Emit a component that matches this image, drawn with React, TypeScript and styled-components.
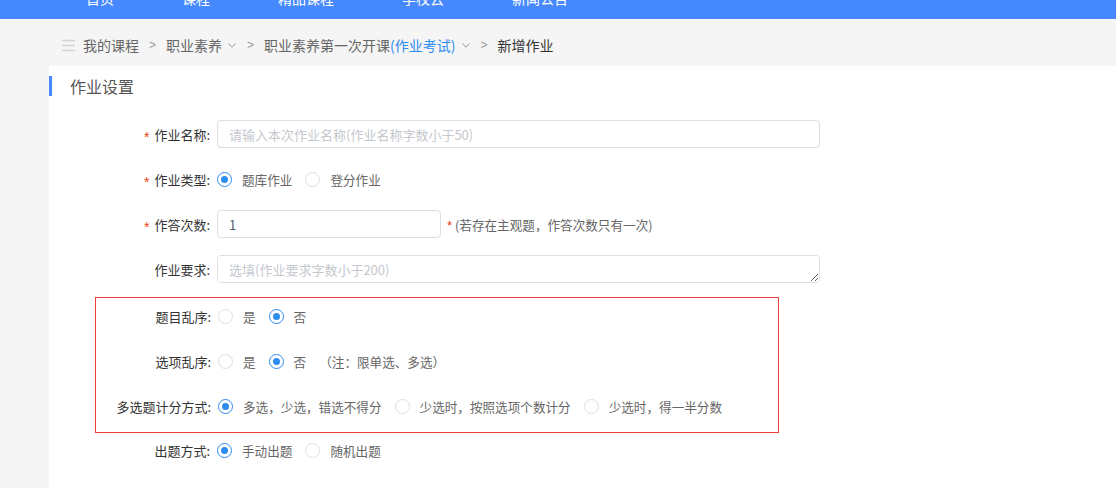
import { useState } from "react";
import styled, { createGlobalStyle } from "styled-components";

const GlobalStyle = createGlobalStyle`
  html, body {
    margin: 0;
    padding: 0;
  }
  body {
    background: #f5f5f5;
    font-family: "Noto Sans CJK SC", "Noto Sans", sans-serif;
    font-size: 13px;
    color: #333;
  }
  * {
    box-sizing: border-box;
  }
`;

const navItems = ["首页", "课程", "精品课程", "学校云", "新闻公告"];

// 顶部导航
const Nav = styled.nav`
  height: 19px;
  background: #4689ff;
  overflow: hidden;
  display: flex;
  gap: 68px;
  padding-left: 86px;
`;

const NavItem = styled.a`
  color: #fff;
  font-size: 14px;
  line-height: 14px;
  margin-top: -9px;
  white-space: nowrap;
  cursor: pointer;
`;

// 面包屑
const Breadcrumb = styled.div`
  height: 47px;
  display: flex;
  align-items: center;
  padding: 5px 0 0 62px;
  font-size: 14px;
  color: #666;
`;

const MenuIcon = styled.svg`
  margin-right: 8px;
`;

const Crumb = styled.span<{ $current?: boolean }>`
  color: ${(p) => (p.$current ? "#333" : "#666")};
  white-space: nowrap;
`;

const CrumbLink = styled.span`
  color: #2d8cf0;
`;

const Sep = styled.span`
  margin: 0 10px;
  color: #999;
  font-family: "Liberation Sans", sans-serif;
  font-size: 12px;
`;

const Caret = styled.svg`
  margin: 0 1px 0 6px;
`;

// 主体
const Panel = styled.div`
  margin-left: 49px;
  background: #fff;
  min-height: calc(100vh - 66px);
  padding-top: 10px;
`;

const SectionTitle = styled.div`
  border-left: 3px solid #4689ff;
  height: 20px;
  line-height: 20px;
  padding-left: 18px;
  font-size: 16px;
  color: #555;
`;

const Form = styled.div`
  padding: 24px 0 0 46px;
`;

const Row = styled.div<{ $mb?: number }>`
  display: flex;
  align-items: center;
  min-height: 28px;
  margin-bottom: ${(p) => (p.$mb ?? 17)}px;
`;

const Label = styled.label`
  width: 115px;
  margin-right: 7px;
  text-align: right;
  color: #333;
  white-space: nowrap;
  flex-shrink: 0;
`;

const Star = styled.span`
  color: #ed3f14;
  font-family: "Liberation Sans", sans-serif;
  font-size: 14px;
  margin-right: 5px;
  position: relative;
  top: 2px;
`;

const Input = styled.input<{ $width: number }>`
  width: ${(p) => p.$width}px;
  height: 28px;
  border: 1px solid #dcdee2;
  border-radius: 4px;
  padding: 0 11px;
  font: inherit;
  color: #515a6e;
  outline: none;

  &::placeholder {
    color: #c5c8ce;
  }
`;

const TextArea = styled.textarea`
  display: block;
  width: 603px;
  height: 28px;
  border: 1px solid #dcdee2;
  border-radius: 4px;
  padding: 4px 11px;
  line-height: 18px;
  font: inherit;
  color: #515a6e;
  outline: none;
  resize: vertical;

  &::placeholder {
    color: #c5c8ce;
  }
`;

const Hint = styled.span`
  margin-left: 6px;
  color: #666;
  font-size: 12.6px;
  white-space: nowrap;
`;

const HintStar = styled.span`
  color: #ed3f14;
  font-family: "Liberation Sans", sans-serif;
  font-size: 13px;
  margin-right: 3px;
`;

const Note = styled.span`
  color: #666;
  font-size: 12.6px;
  white-space: nowrap;
`;

const Option = styled.label`
  display: inline-flex;
  align-items: center;
  margin-right: 13px;
  color: #666;
  font-size: 12.6px;
  white-space: nowrap;
  cursor: pointer;
`;

const RadioCircle = styled.span<{ $checked: boolean }>`
  width: 15px;
  height: 15px;
  border-radius: 50%;
  border: 1px solid ${(p) => (p.$checked ? "#2d8cf0" : "#dcdee2")};
  display: inline-flex;
  align-items: center;
  justify-content: center;
  margin-right: 10px;
  background: #fff;

  &::after {
    content: "";
    width: 7px;
    height: 7px;
    border-radius: 50%;
    background: ${(p) => (p.$checked ? "#2d8cf0" : "transparent")};
  }
`;

const OrderBox = styled.div`
  width: 684px;
  border: 1px solid #f23c3c;
  padding: 4px 0 12px;
  margin-bottom: 3px;
`;

function RadioGroup({
  options,
  value,
  onChange,
}: {
  options: string[];
  value: number;
  onChange: (i: number) => void;
}) {
  return (
    <>
      {options.map((opt, i) => (
        <Option key={opt} onClick={() => onChange(i)}>
          <RadioCircle $checked={value === i} />
          {opt}
        </Option>
      ))}
    </>
  );
}

export default function App() {
  const [workType, setWorkType] = useState(0);
  const [questionOrder, setQuestionOrder] = useState(1);
  const [optionOrder, setOptionOrder] = useState(1);
  const [scoreMode, setScoreMode] = useState(0);
  const [pickMode, setPickMode] = useState(0);

  return (
    <>
      <GlobalStyle />
      <Nav>
        {navItems.map((item) => (
          <NavItem key={item}>{item}</NavItem>
        ))}
      </Nav>

      <Breadcrumb>
        <MenuIcon width="13" height="13" viewBox="0 0 13 13">
          <path d="M0 1.5h13M0 6.5h13M0 11.5h13" stroke="#d4d4d4" strokeWidth="1.3" />
        </MenuIcon>
        <Crumb>我的课程</Crumb>
        <Sep>&gt;</Sep>
        <Crumb>职业素养</Crumb>
        <Caret width="8" height="5" viewBox="0 0 8 5">
          <path d="M0.5 0.5L4 4.2L7.5 0.5" fill="none" stroke="#999" strokeWidth="1" />
        </Caret>
        <Sep>&gt;</Sep>
        <Crumb>
          职业素养第一次开课<CrumbLink>(作业考试)</CrumbLink>
        </Crumb>
        <Caret width="8" height="5" viewBox="0 0 8 5">
          <path d="M0.5 0.5L4 4.2L7.5 0.5" fill="none" stroke="#999" strokeWidth="1" />
        </Caret>
        <Sep>&gt;</Sep>
        <Crumb $current>新增作业</Crumb>
      </Breadcrumb>

      <Panel>
        <SectionTitle>作业设置</SectionTitle>
        <Form>
          <Row>
            <Label>
              <Star>*</Star>作业名称:
            </Label>
            <Input $width={603} placeholder="请输入本次作业名称(作业名称字数小于50)" />
          </Row>
          <Row>
            <Label>
              <Star>*</Star>作业类型:
            </Label>
            <RadioGroup options={["题库作业", "登分作业"]} value={workType} onChange={setWorkType} />
          </Row>
          <Row>
            <Label>
              <Star>*</Star>作答次数:
            </Label>
            <Input $width={224} defaultValue="1" />
            <Hint>
              <HintStar>*</HintStar>(若存在主观题，作答次数只有一次)
            </Hint>
          </Row>
          <Row $mb={14}>
            <Label>作业要求:</Label>
            <TextArea rows={1} placeholder="选填(作业要求字数小于200)" />
          </Row>

          <OrderBox>
            <Row>
              <Label>题目乱序:</Label>
              <RadioGroup options={["是", "否"]} value={questionOrder} onChange={setQuestionOrder} />
            </Row>
            <Row>
              <Label>选项乱序:</Label>
              <RadioGroup options={["是", "否"]} value={optionOrder} onChange={setOptionOrder} />
              <Note>（注：限单选、多选）</Note>
            </Row>
            <Row $mb={0}>
              <Label>多选题计分方式:</Label>
              <RadioGroup
                options={["多选，少选，错选不得分", "少选时，按照选项个数计分", "少选时，得一半分数"]}
                value={scoreMode}
                onChange={setScoreMode}
              />
            </Row>
          </OrderBox>

          <Row>
            <Label>出题方式:</Label>
            <RadioGroup options={["手动出题", "随机出题"]} value={pickMode} onChange={setPickMode} />
          </Row>
        </Form>
      </Panel>
    </>
  );
}
